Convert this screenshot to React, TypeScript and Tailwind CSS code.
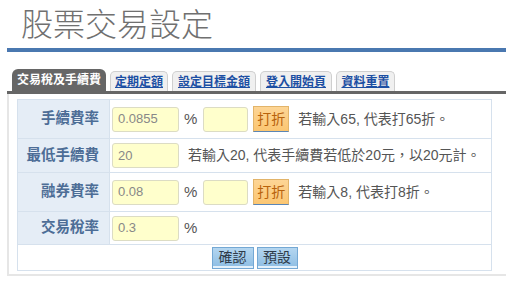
import React from "react";

const tabs = [
  { label: "定期定額", w: "w-[58px]" },
  { label: "設定目標金額", w: "w-[84px]" },
  { label: "登入開始頁", w: "w-[72px]" },
  { label: "資料重置", w: "w-[59px]" },
];

function RateInput({ value, wide = true }: { value?: string; wide?: boolean }) {
  return (
    <div
      className={`${wide ? "w-[67px]" : "w-[45px]"} flex h-[25px] items-center rounded-[3px] border border-[#dcdcc4] bg-[#ffffcc] px-[5px] text-[13px] text-[#888]`}
    >
      {value}
    </div>
  );
}

function DiscountButton() {
  return (
    <button
      className="ml-[5px] flex h-[26px] w-[36px] items-center justify-center border border-[#e2b46a] border-b-[#5b86b6] bg-gradient-to-b from-[#fdd595] to-[#fbc672] text-[14px] text-[#b8620c]"
      type="button"
    >
      打折
    </button>
  );
}

function Row({
  label,
  height,
  children,
}: {
  label: string;
  height: string;
  children: React.ReactNode;
}) {
  return (
    <div className={`flex ${height} border-b border-[#d6e1ed]`}>
      <div className="flex w-[92px] shrink-0 items-center justify-end border-r border-[#d6e1ed] bg-[#e5edf6] pr-[10px] text-[14.5px] font-bold text-[#4d6d96]">
        {label}
      </div>
      <div className="flex flex-1 items-center pl-[2px] text-[14px] text-[#555]">
        {children}
      </div>
    </div>
  );
}

export default function App() {
  return (
    <div className="relative h-[291px] w-[506px] overflow-hidden bg-white font-['Liberation_Sans','Noto_Sans_CJK_TC',sans-serif]">
      <h1 className="h-[48px] pl-[21px] pt-[5px] text-[32px] font-light leading-[40px] text-[#707070]">
        股票交易設定
      </h1>
      <div className="ml-[7px] h-[4px] bg-[#4a78b0]" />

      <div className="ml-[12px] mt-[17px] flex h-[22px] items-end gap-[4px]">
        <div className="flex h-[22px] w-[94px] items-center justify-center rounded-t-[6px] bg-[#666] text-[12px] font-bold text-white">
          交易稅及手續費
        </div>
        {tabs.map((t) => (
          <div
            key={t.label}
            className={`${t.w} flex h-[20px] items-center justify-center rounded-t-[5px] border border-b-0 border-[#cfcfcf] bg-[#f0f0f0] text-[12px] font-bold text-[#1c4fa3] underline`}
          >
            {t.label}
          </div>
        ))}
      </div>
      <div className="ml-[7px] h-[3px] bg-[#666]" />

      <div className="ml-[7px] h-[182px] border-b-2 border-l-2 border-[#e6e6e6] pl-[8px] pt-[5px]">
        <div className="w-[475px] border-x border-t border-[#d6e1ed]">
          <Row label="手續費率" height="h-[39px]">
            <RateInput value="0.0855" />
            <span className="ml-[5px] mr-[6px] text-[15px]">%</span>
            <RateInput wide={false} />
            <DiscountButton />
            <span className="ml-[9px]">若輸入65, 代表打65折。</span>
          </Row>
          <Row label="最低手續費" height="h-[34px]">
            <RateInput value="20" />
            <span className="ml-[9px]">若輸入20, 代表手續費若低於20元，以20元計。</span>
          </Row>
          <Row label="融券費率" height="h-[39px]">
            <RateInput value="0.08" />
            <span className="ml-[5px] mr-[6px] text-[15px]">%</span>
            <RateInput wide={false} />
            <DiscountButton />
            <span className="ml-[9px]">若輸入8, 代表打8折。</span>
          </Row>
          <Row label="交易稅率" height="h-[33px]">
            <RateInput value="0.3" />
            <span className="ml-[5px] text-[15px]">%</span>
          </Row>
          <div className="flex h-[26px] items-center justify-center gap-[3px] border-b border-[#d6e1ed]">
            <button
              className="flex h-[22px] w-[42px] items-center justify-center border border-[#74a8d4] bg-gradient-to-b from-[#b4d6f0] to-[#8dbde3] text-[14px] text-[#2f3b4a] shadow-[inset_0_-2px_0_#e4f1fb]"
              type="button"
            >
              確認
            </button>
            <button
              className="flex h-[22px] w-[41px] items-center justify-center border border-[#74a8d4] bg-gradient-to-b from-[#b4d6f0] to-[#8dbde3] text-[14px] text-[#2f3b4a] shadow-[inset_0_-2px_0_#e4f1fb]"
              type="button"
            >
              預設
            </button>
          </div>
        </div>
      </div>
    </div>
  );
}
